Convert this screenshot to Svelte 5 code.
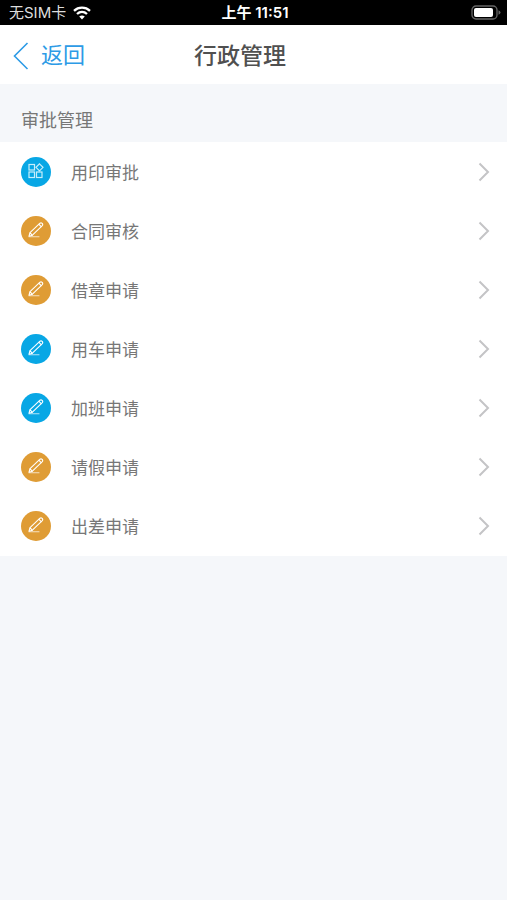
<script>
  const items = [
    { name: '用印审批', icon: 'grid', color: 'blue' },
    { name: '合同审核', icon: 'pen', color: 'orange' },
    { name: '借章申请', icon: 'pen', color: 'orange' },
    { name: '用车申请', icon: 'pen', color: 'blue' },
    { name: '加班申请', icon: 'pen', color: 'blue' },
    { name: '请假申请', icon: 'pen', color: 'orange' },
    { name: '出差申请', icon: 'pen', color: 'orange' }
  ];
</script>

<div class="status">
  <div class="carrier">
    <span>无SIM卡</span>
    <svg width="18" height="14" viewBox="0 0 18 14" fill="none" stroke="#fff" stroke-width="2.3">
      <path d="M1 4.8C5.5 .6 12.5 .6 17 4.8" />
      <path d="M4 8C6.9 5.3 11.1 5.3 14 8" />
      <path d="M9 13.5L6.2 10.6Q9 8.3 11.8 10.6Z" fill="#fff" stroke="none" />
    </svg>
  </div>
  <div class="time">上午 11:51</div>
  <svg class="battery" width="30" height="15" viewBox="0 0 30 15">
    <rect x="1" y="1" width="25" height="13" rx="4" fill="none" stroke="#666" stroke-width="1.3" />
    <rect x="3" y="3" width="19" height="9" rx="2" fill="#fff" />
    <path d="M27.5 5.3Q29.5 6 29.5 7.5T27.5 9.7Z" fill="#666" />
  </svg>
</div>

<header>
  <button class="back">
    <svg width="16" height="28" viewBox="0 0 16 28" fill="none" stroke="#2d9be6" stroke-width="1.6">
      <path d="M14.5 1L1.5 14L14.5 27" />
    </svg>
    返回
  </button>
  <h1>行政管理</h1>
</header>

<main>
  <h2>审批管理</h2>
  <ul>
    {#each items as item}
      <li>
        <a href="#{item.name}">
          <span class="icon {item.color}">
            {#if item.icon == 'grid'}
              <svg width="16" height="16" viewBox="0 0 16 16" fill="none" stroke="#c8eefb" stroke-width="1.2">
                <rect x="1" y="1.5" width="5.5" height="5.5" />
                <rect x="1" y="9" width="5.5" height="5.5" />
                <rect x="8.5" y="9" width="5.5" height="5.5" />
                <path d="M11.5 .8L15 4.3L11.5 7.800L8 4.300Z" />
              </svg>
            {:else}
              <svg width="16" height="16" viewBox="0 0 16 16" fill="none" stroke="#fff" stroke-width="1.1" stroke-linejoin="round" stroke-linecap="round">
                <path d="M1 14.2L2 10.7L12 1.2Q13.100 .4 14.200 1.400Q15.200 2.500 14.300 3.600L4.400 13.200Z" />
                <path d="M11 2.300L13.200 4.600M2.200 11L4.200 13.100" />
                <path d="M1 14.700H11" opacity=".7" />
              </svg>
            {/if}
          </span>
          <span class="name">{item.name}</span>
          <svg class="arrow" width="12" height="20" viewBox="0 0 12 20" fill="none" stroke="#c4c4c6" stroke-width="2">
            <path d="M1.5 1.5L10 10L1.5 18.5" />
          </svg>
        </a>
      </li>
    {/each}
  </ul>
</main>

<style>
  :global(body) {
    background: #f5f7fa;
    font-family: "Liberation Sans", "Noto Sans CJK SC", sans-serif;
  }
  svg {
    display: block;
    flex: none;
  }
  .status {
    display: grid;
    grid-template-columns: 1fr auto 1fr;
    align-items: center;
    height: 25px;
    padding: 0 6px 0 9px;
    background: #000;
    color: #fff;
    font-family: Inter, "Noto Sans CJK SC", sans-serif;
    font-size: 15px;
    line-height: 25px;
  }
  .carrier {
    display: flex;
    align-items: center;
    gap: 7px;
  }
  .carrier span {
    color: #ddd;
  }
  .time {
    font-weight: 600;
  }
  .battery {
    justify-self: end;
  }
  header {
    display: grid;
    grid-template-columns: 1fr auto 1fr;
    align-items: center;
    height: 57px;
    padding: 2px 40px 0 13px;
    background: #fff;
  }
  .back {
    display: flex;
    align-items: center;
    justify-self: start;
    gap: 12px;
    padding: 0;
    border: 0;
    background: none;
    color: #2d9be6;
    font-family: inherit;
    font-size: 22px;
    line-height: 32px;
  }
  h1 {
    margin: 0;
    color: #505050;
    font-size: 23px;
    font-weight: 500;
    line-height: 32px;
  }
  h2 {
    margin: 0;
    padding: 24px 21px 8px;
    color: #777;
    font-size: 18px;
    font-weight: 400;
    line-height: 26px;
  }
  ul {
    margin: 0;
    padding: 0 0 1px;
    background: #fff;
    list-style: none;
  }
  a {
    display: flex;
    align-items: center;
    height: 59px;
    padding: 0 17px 0 21px;
    color: #777;
    text-decoration: none;
  }
  .icon {
    display: flex;
    align-items: center;
    justify-content: center;
    box-sizing: border-box;
    width: 30px;
    height: 30px;
    padding-bottom: 2px;
    border-radius: 50%;
  }
  .blue {
    background: #08a7e5;
  }
  .orange {
    background: #df9c35;
  }
  .name {
    flex: 1;
    margin-left: 20px;
    padding-top: 4px;
    font-size: 17px;
    line-height: 26px;
  }
</style>
